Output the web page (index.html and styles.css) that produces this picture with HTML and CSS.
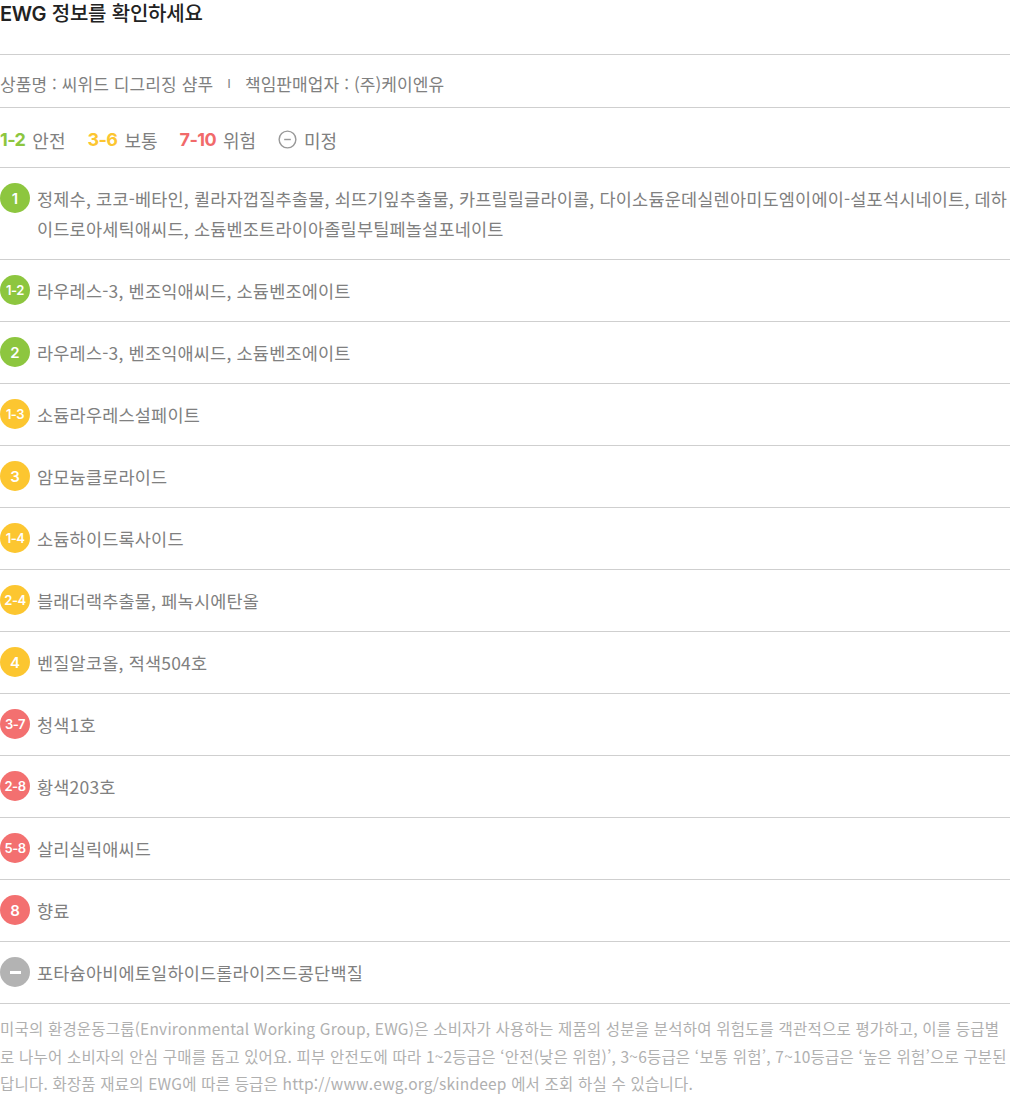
FILE: index.html
```html
<!DOCTYPE html>
<html lang="ko">
<head>
    <meta charset="UTF-8">
    <meta name="viewport" content="width=device-width, initial-scale=1.0">
    <title>EWG 정보</title>
    <link rel="stylesheet" href="styles.css">
</head>
<body>
    <div class="ewg">
        <h2 class="ewg-title"><span class="en">EWG</span> 정보를 확인하세요</h2>

        <!-- 상품 정보 -->
        <div class="product">
            <span>상품명 : 씨위드 디그리징 샴푸</span>
            <span class="sep">I</span>
            <span>책임판매업자 : (주)케이엔유</span>
        </div>

        <!-- 등급 범례 -->
        <div class="legend">
            <span class="legend-item"><b class="green">1-2</b> 안전</span>
            <span class="legend-item"><b class="yellow">3-6</b> 보통</span>
            <span class="legend-item"><b class="red">7-10</b> 위험</span>
            <span class="legend-item">
                <svg class="none-icon" width="19" height="19" viewBox="0 0 20 20">
                    <circle cx="10" cy="10" r="8.8" fill="none" stroke="#999" stroke-width="1.5"/>
                    <line x1="6.5" y1="10" x2="13.5" y2="10" stroke="#999" stroke-width="1.5"/>
                </svg>
                미정
            </span>
        </div>

        <ul class="grade-list">
            <li class="row"><span class="badge green-bg">1</span><p>정제수, 코코-베타인, 퀼라자껍질추출물, 쇠뜨기잎추출물, 카프릴릴글라이콜, 다이소듐운데실렌아미도엠이에이-설포석시네이트, 데하이드로아세틱애씨드, 소듐벤조트라이아졸릴부틸페놀설포네이트</p></li>
            <li class="row"><span class="badge green-bg small">1-2</span><p>라우레스-3, 벤조익애씨드, 소듐벤조에이트</p></li>
            <li class="row"><span class="badge green-bg">2</span><p>라우레스-3, 벤조익애씨드, 소듐벤조에이트</p></li>
            <li class="row"><span class="badge yellow-bg small">1-3</span><p>소듐라우레스설페이트</p></li>
            <li class="row"><span class="badge yellow-bg">3</span><p>암모늄클로라이드</p></li>
            <li class="row"><span class="badge yellow-bg small">1-4</span><p>소듐하이드록사이드</p></li>
            <li class="row"><span class="badge yellow-bg small">2-4</span><p>블래더랙추출물, 페녹시에탄올</p></li>
            <li class="row"><span class="badge yellow-bg">4</span><p>벤질알코올, 적색504호</p></li>
            <li class="row"><span class="badge red-bg small">3-7</span><p>청색1호</p></li>
            <li class="row"><span class="badge red-bg small">2-8</span><p>황색203호</p></li>
            <li class="row"><span class="badge red-bg small">5-8</span><p>살리실릭애씨드</p></li>
            <li class="row"><span class="badge red-bg">8</span><p>향료</p></li>
            <li class="row"><span class="badge gray-bg"><i class="dash"></i></span><p>포타슘아비에토일하이드롤라이즈드콩단백질</p></li>
        </ul>

        <p class="notice">미국의 환경운동그룹(Environmental Working Group, EWG)은 소비자가 사용하는 제품의 성분을 분석하여 위험도를 객관적으로 평가하고, 이를 등급별로 나누어 소비자의 안심 구매를 돕고 있어요. 피부 안전도에 따라 1~2등급은 ‘안전(낮은 위험)’, 3~6등급은 ‘보통 위험’, 7~10등급은 ‘높은 위험’으로 구분된답니다. 화장품 재료의 EWG에 따른 등급은 http://www.ewg.org/skindeep 에서 조회 하실 수 있습니다.</p>
    </div>
</body>
</html>
```

FILE: styles.css
```css
* {
    box-sizing: border-box;
    margin: 0;
    padding: 0;
}

body {
    font-family: "Noto Sans CJK KR", "Noto Sans", sans-serif;
    background: #fff;
    color: #808080;
}

.ewg {
    width: 1010px;
}

.ewg-title {
    font-size: 20px;
    font-weight: 500;
    line-height: 26px;
    color: #222;
    padding-bottom: 27px;
    border-bottom: 1px solid #cfcfcf;
    letter-spacing: -0.2px;
}

    .ewg-title .en {
        font-family: Inter, sans-serif;
        font-weight: 600;
        letter-spacing: -0.3px;
    }

.product {
    display: flex;
    align-items: center;
    height: 53px;
    font-size: 17px;
    padding-top: 5px;
    border-bottom: 1px solid #cfcfcf;
    letter-spacing: 0.1px;
}

    .product .sep {
        margin: 0 14px 0 14px;
        font-family: "Liberation Sans", sans-serif;
        font-size: 13px;
    }

.legend {
    display: flex;
    align-items: center;
    gap: 22px;
    height: 60px;
    font-size: 18px;
    padding-top: 4px;
    border-bottom: 1px solid #cfcfcf;
}

.legend-item {
    display: flex;
    align-items: center;
    gap: 7px;
}

    .legend-item b {
        font-family: Inter, sans-serif;
        font-weight: 700;
        font-size: 18px;
        letter-spacing: -0.6px;
    }

.green { color: #8dc63f; }
.yellow { color: #fcc630; }
.red { color: #f16a6a; }

.grade-list {
    list-style: none;
}

.row {
    display: flex;
    align-items: flex-start;
    gap: 7px;
    padding: 16px 0 15px;
    border-bottom: 1px solid #cfcfcf;
}

    .row p {
        font-size: 17.5px;
        line-height: 30px;
        letter-spacing: 0.2px;
        flex: 1;
    }

.badge {
    flex: none;
    width: 30px;
    height: 30px;
    margin-top: -1px;
    border-radius: 50%;
    display: flex;
    align-items: center;
    justify-content: center;
    color: #fff;
    font-family: Inter, sans-serif;
    font-weight: 600;
    font-size: 15px;
}

    .badge.small {
        font-size: 13px;
        letter-spacing: -0.5px;
    }

.green-bg { background: #8dc63f; }
.yellow-bg { background: #fcc630; }
.red-bg { background: #f37070; }
.gray-bg { background: #b3b3b3; }

.dash {
    display: block;
    width: 11px;
    height: 3px;
    background: #fff;
}

.notice {
    font-size: 15.5px;
    line-height: 27.5px;
    color: #b0b0b0;
    padding-top: 11px;
    letter-spacing: 0.2px;
}
```
